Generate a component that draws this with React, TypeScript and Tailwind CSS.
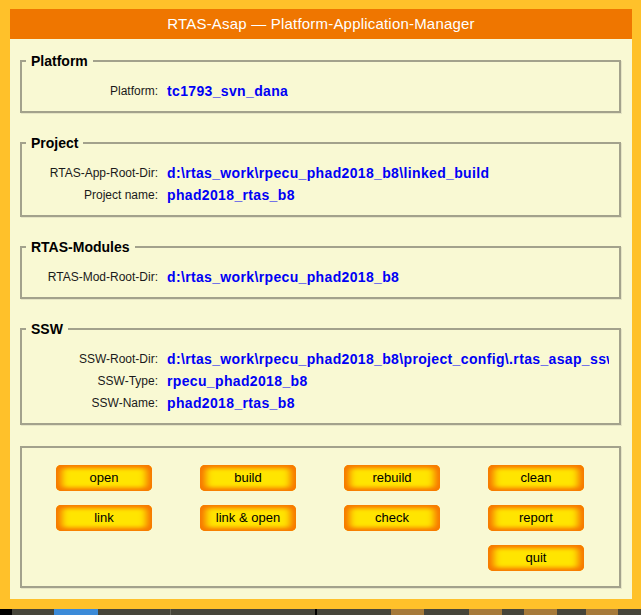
const font = { fontFamily: '"Liberation Sans", Arial, sans-serif' };

type Row = { label: string; value: string };

const groups: { title: string; rows: Row[] }[] = [
  { title: "Platform", rows: [{ label: "Platform:", value: "tc1793_svn_dana" }] },
  {
    title: "Project",
    rows: [
      { label: "RTAS-App-Root-Dir:", value: "d:\\rtas_work\\rpecu_phad2018_b8\\linked_build" },
      { label: "Project name:", value: "phad2018_rtas_b8" },
    ],
  },
  {
    title: "RTAS-Modules",
    rows: [{ label: "RTAS-Mod-Root-Dir:", value: "d:\\rtas_work\\rpecu_phad2018_b8" }],
  },
  {
    title: "SSW",
    rows: [
      {
        label: "SSW-Root-Dir:",
        value: "d:\\rtas_work\\rpecu_phad2018_b8\\project_config\\.rtas_asap_ssw",
      },
      { label: "SSW-Type:", value: "rpecu_phad2018_b8" },
      { label: "SSW-Name:", value: "phad2018_rtas_b8" },
    ],
  },
];

const buttons = [
  "open", "build", "rebuild", "clean",
  "link", "link & open", "check", "report",
  "", "", "", "quit",
];

function Group({ title, rows }: { title: string; rows: Row[] }) {
  return (
    <fieldset className="min-w-0 border-2 border-[#a3a28c] pt-[11px] pb-[9px] pr-[10px] shadow-[1px_1px_0_#e6e5c4]">
      <legend className="ml-[4px] px-[5px] text-[14px] leading-[16px] font-bold text-black">
        {title}
      </legend>
      {rows.map((r) => (
        <div key={r.label} className="flex h-[22px] min-w-0 items-center">
          <span className="w-[136px] shrink-0 text-right text-[12px] text-[#1a1a1a]">
            {r.label}
          </span>
          <span className="ml-[9px] min-w-0 overflow-hidden whitespace-nowrap text-[14px] font-bold tracking-[0.35px] text-[#0000f5]">
            {r.value}
          </span>
        </div>
      ))}
    </fieldset>
  );
}

function OrangeButton({ label }: { label: string }) {
  if (!label) return <div className="h-[26px] w-[96px]" />;
  return (
    <button className="h-[26px] w-[96px] rounded-[5px] bg-[#ffe500] text-[13px] text-black shadow-[inset_9px_0_7px_-3px_#f77a00,inset_-9px_0_7px_-3px_#f77a00,inset_0_4px_4px_-1px_#f77a00,inset_0_-4px_4px_-1px_#f77a00]">
      {label}
    </button>
  );
}

export default function App() {
  return (
    <div className="flex h-[615px] w-[641px] flex-col bg-[#ffc12a]" style={font}>
      <div className="ml-[10px] mr-[9px] mt-[9px] flex flex-1 flex-col">
        <div className="flex h-[30px] items-center justify-center bg-[#ef7600] text-[15px] tracking-[0.2px] text-white">
          RTAS-Asap — Platform-Application-Manager
        </div>
        <div className="flex flex-1 flex-col gap-[22px] bg-[#f9f9d3] pl-[10px] pr-[11px] pt-[14px]">
          {groups.map((g) => (
            <Group key={g.title} title={g.title} rows={g.rows} />
          ))}
          <div className="-mt-[1px] grid h-[142px] grid-cols-[repeat(4,96px)] content-start gap-x-[48px] gap-y-[14px] border-2 border-[#a3a28c] pl-[34px] pt-[17px] shadow-[1px_1px_0_#e6e5c4]">
            {buttons.map((b, i) => (
              <OrangeButton key={i} label={b} />
            ))}
          </div>
        </div>
        <div className="h-[10px]" />
      </div>
      <div className="flex h-[6px] bg-[#46453a]">
        <div className="w-[12px] bg-black" />
        <div className="ml-[42px] w-[44px] bg-[#3b8ad8]" />
        <div className="ml-[72px] w-[1px] bg-[#6a695c]" />
        <div className="ml-[144px] w-[2px] bg-black" />
        <div className="ml-[74px] w-[33px] bg-[#a67a3a]" />
        <div className="ml-[45px] w-[33px] bg-[#a67a3a]" />
        <div className="ml-[22px] w-[33px] bg-[#a67a3a]" />
        <div className="ml-[29px] w-[32px] bg-[#a67a3a]" />
      </div>
    </div>
  );
}
